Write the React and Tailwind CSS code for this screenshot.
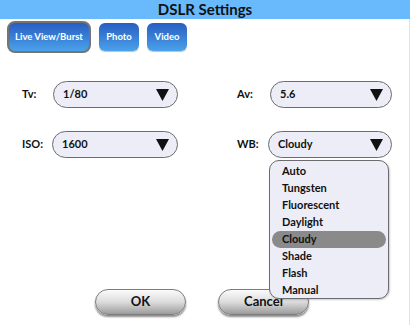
import React from "react";

const font = { fontFamily: "Lato, 'Noto Sans', sans-serif" };

function Tri() {
  return (
    <svg width="13" height="12" viewBox="0 0 13 12" className="shrink-0">
      <path d="M0 0 H13 L6.5 12 Z" fill="#111" />
    </svg>
  );
}

function Select({ value, w }) {
  return (
    <div
      className={`flex items-center justify-between h-[27px] ${w} rounded-full border-[1.5px] border-[#6b6b70] bg-[#ededf7] pl-[9px] pr-[8px]`}
    >
      <span className="text-[11px] font-bold text-[#111]">{value}</span>
      <Tri />
    </div>
  );
}

const wbItems = ["Auto", "Tungsten", "Fluorescent", "Daylight", "Cloudy", "Shade", "Flash", "Manual"];

export default function App() {
  return (
    <div className="relative w-[413px] h-[329px] bg-white overflow-hidden" style={font}>
      <div className="w-[410px] h-[19px] bg-[#68bafc] flex items-center justify-center">
        <span className="text-[15px] font-bold text-[#111] leading-none">DSLR Settings</span>
      </div>
      <div className="w-[410px] h-[306px] border-r border-[#e2e2e2] flex flex-col">
        <div className="flex items-center gap-[8px] pl-[7px] pt-[2px]">
          <div className="h-[32px] w-[84px] rounded-[8px] border-[2.5px] border-[#747474] bg-gradient-to-b from-[#2a5cc2] to-[#4ba2ea] flex items-center justify-center">
            <span className="text-[9.5px] font-bold text-white">Live View/Burst</span>
          </div>
          <div className="h-[28px] w-[40px] rounded-[6px] bg-gradient-to-b from-[#2a5cc2] to-[#4ba2ea] flex items-center justify-center shadow-[0_1px_1px_rgba(0,0,0,0.25)]">
            <span className="text-[9.5px] font-bold text-white">Photo</span>
          </div>
          <div className="h-[28px] w-[40px] rounded-[6px] bg-gradient-to-b from-[#2a5cc2] to-[#4ba2ea] flex items-center justify-center shadow-[0_1px_1px_rgba(0,0,0,0.25)]">
            <span className="text-[9.5px] font-bold text-white">Video</span>
          </div>
        </div>

        <div className="mt-[28px] grid grid-cols-[235px_1fr] gap-y-[23px]">
          <div className="flex items-center">
            <span className="w-[31px] ml-[22px] text-[11px] font-bold text-[#111]">Tv:</span>
            <Select value="1/80" w="w-[125px]" />
          </div>
          <div className="flex items-center">
            <span className="w-[33px] ml-[2px] text-[11px] font-bold text-[#111]">Av:</span>
            <Select value="5.6" w="w-[122px]" />
          </div>
          <div className="flex items-center">
            <span className="w-[30px] ml-[22px] text-[11px] font-bold text-[#111]">ISO:</span>
            <Select value="1600" w="w-[126px]" />
          </div>
          <div className="flex items-center">
            <span className="w-[31px] ml-[2px] text-[11px] font-bold text-[#111]">WB:</span>
            <Select value="Cloudy" w="w-[124px]" />
          </div>
        </div>

        <div className="mt-[131px] flex gap-[32px] pl-[95px]">
          <div className="h-[26px] w-[91px] rounded-full border border-[#7c7c7c] bg-gradient-to-b from-[#fbfbfb] via-[#dcdcdc] to-[#9c9c9c] shadow-[0_2px_2px_rgba(0,0,0,0.45)] flex items-center justify-center">
            <span className="text-[13px] font-bold text-[#111]">OK</span>
          </div>
          <div className="h-[26px] w-[91px] rounded-full border border-[#7c7c7c] bg-gradient-to-b from-[#fbfbfb] via-[#dcdcdc] to-[#9c9c9c] shadow-[0_2px_2px_rgba(0,0,0,0.45)] flex items-center justify-center">
            <span className="text-[13px] font-bold text-[#111]">Cancel</span>
          </div>
        </div>
      </div>

      <div className="absolute left-[269px] top-[160px] w-[120px] h-[139px] rounded-[10px] border border-[#6b6b70] bg-[#ededf7] pt-[2px] px-[2px] shadow-[1px_1px_2px_rgba(0,0,0,0.2)]">
        {wbItems.map((it) => (
          <div
            key={it}
            className={`h-[17px] flex items-center pl-[10px] rounded-full text-[11px] font-bold text-[#111] ${
              it === "Cloudy" ? "bg-[#8a8a8a]" : ""
            }`}
          >
            {it}
          </div>
        ))}
      </div>
    </div>
  );
}
